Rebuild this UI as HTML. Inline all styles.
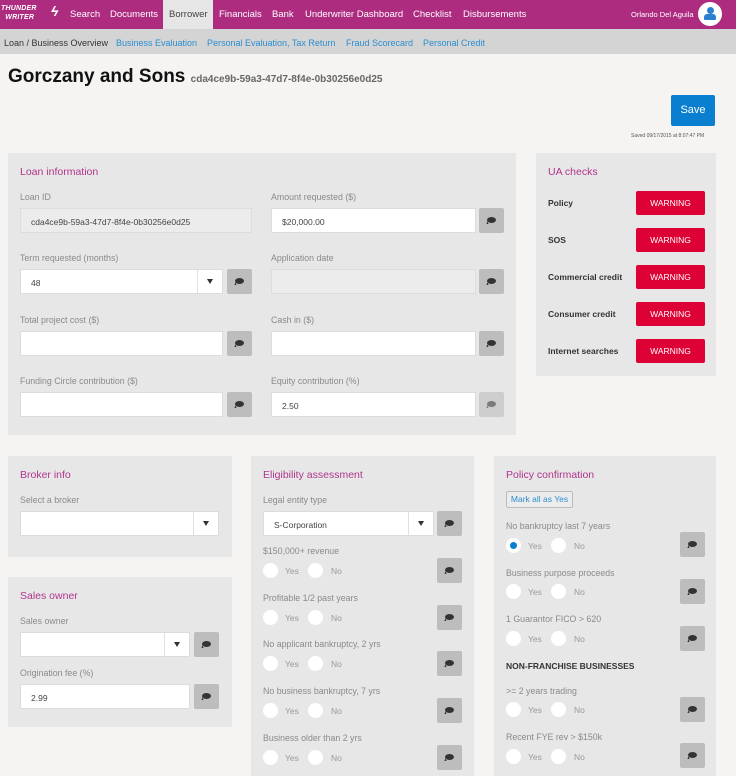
<!DOCTYPE html>
<html><head><meta charset="utf-8"><style>
*{box-sizing:border-box;margin:0;padding:0}
body{width:736px;height:775px;overflow:hidden;background:#f5f4f2;font-family:"Liberation Sans",sans-serif;position:relative;color:#777}
.a{position:absolute}
.nav{left:0;top:0;width:736px;height:29px;background:#ad2c80}
.nav span{position:absolute;top:9px;font-size:9.5px;color:#fff}
.sub{left:0;top:29px;width:736px;height:25px;background:#d4d4d4}
.sub span{position:absolute;top:9px;font-size:9px;color:#2b8ed0}
.panel{background:#e7e7e7}
.h{font-size:10.5px;color:#b0348c}
.l{font-size:8.8px;color:#8a8a8a}
.in{background:#fff;border:1px solid #dcdcdc;height:25px;font-size:8.5px;color:#444;padding:8px 0 0 10px}
.dis{background:#ececec;border:1px solid #ddd}
.c{background:#bdbdbd;width:25px;height:25px;border-radius:2px}
.c:after{content:"";position:absolute;left:8px;top:9px;width:9px;height:6px;background:#333;border-radius:50%}
.c:before{content:"";position:absolute;left:8px;top:13px;border-left:2px solid #333;border-top:3px solid transparent;transform:skewX(-20deg)}
.arr{border-left:1px solid #e0e0e0;width:25px;height:23px;top:0;right:0}
.arr:after{content:"";position:absolute;left:9px;top:9px;border-left:3.5px solid transparent;border-right:3.5px solid transparent;border-top:5px solid #333}
.w{background:#de0135;color:#fff;font-size:8.5px;width:69px;height:24px;border-radius:2px;text-align:center;line-height:24px;left:636px}
.ul{font-size:8.5px;font-weight:bold;color:#333;left:548px}
.r{width:15px;height:15px;border-radius:50%;background:#fff}
.y{font-size:8.5px;color:#999}
</style></head><body>
<div class="a nav">
<div class="a" style="left:1px;top:5px;font-size:7px;font-weight:bold;font-style:italic;color:#fff;line-height:8.5px;letter-spacing:.2px">THUNDER<br>&nbsp;&nbsp;WRITER</div>
<div class="a" style="left:51px;top:3px;font-size:14px;color:#fff;font-style:italic;font-weight:bold">ϟ</div>
<div class="a" style="left:163px;top:0;width:50px;height:29px;background:#e6e6e6"></div>
<span style="left:70px">Search</span><span style="left:110px">Documents</span><span style="left:169px;color:#444">Borrower</span><span style="left:219px">Financials</span><span style="left:272px">Bank</span><span style="left:305px">Underwriter Dashboard</span><span style="left:413px">Checklist</span><span style="left:463px">Disbursements</span>
<span style="left:631px;font-size:7.5px;top:10px">Orlando Del Aguila</span>
<div class="a" style="left:698px;top:2px;width:24px;height:24px;border-radius:50%;background:#fff"><div class="a" style="left:9px;top:5px;width:7px;height:7px;border-radius:50%;background:#2b7fd0"></div><div class="a" style="left:6px;top:12px;width:12px;height:6px;border-radius:3px 3px 1px 1px;background:#2b7fd0"></div></div>
</div>
<div class="a sub">
<span style="left:4px;color:#333">Loan / Business Overview</span><span style="left:116px">Business Evaluation</span><span style="left:207px">Personal Evaluation, Tax Return</span><span style="left:346px">Fraud Scorecard</span><span style="left:423px">Personal Credit</span>
</div>
<div class="a" style="left:8px;top:66px;font-size:19px;font-weight:bold;color:#111">Gorczany and Sons <span style="font-size:10px;color:#666">cda4ce9b-59a3-47d7-8f4e-0b30256e0d25</span></div>
<div class="a" style="left:671px;top:95px;width:44px;height:31px;background:#0a7fd0;border-radius:2px;color:#fff;font-size:11px;text-align:center;padding-top:9px">Save</div>
<div class="a" style="left:631px;top:133px;font-size:5px;color:#555">Saved 09/17/2015 at 8:07:47 PM</div>

<div class="a panel" style="left:8px;top:153px;width:508px;height:282px"></div>
<div class="a h" style="left:20px;top:166px">Loan information</div>
<div class="a l" style="left:20px;top:192px">Loan ID</div>
<div class="a in dis" style="left:20px;top:208px;width:232px">cda4ce9b-59a3-47d7-8f4e-0b30256e0d25</div>
<div class="a l" style="left:271px;top:192px">Amount requested ($)</div>
<div class="a in" style="left:271px;top:208px;width:205px">$20,000.00</div><div class="a c" style="left:479px;top:208px"></div>
<div class="a l" style="left:20px;top:253px">Term requested (months)</div>
<div class="a in" style="left:20px;top:269px;width:203px">48<div class="a arr"></div></div><div class="a c" style="left:227px;top:269px"></div>
<div class="a l" style="left:271px;top:253px">Application date</div>
<div class="a in dis" style="left:271px;top:269px;width:205px"></div><div class="a c" style="left:479px;top:269px"></div>
<div class="a l" style="left:20px;top:315px">Total project cost ($)</div>
<div class="a in" style="left:20px;top:331px;width:203px"></div><div class="a c" style="left:227px;top:331px"></div>
<div class="a l" style="left:271px;top:315px">Cash in ($)</div>
<div class="a in" style="left:271px;top:331px;width:205px"></div><div class="a c" style="left:479px;top:331px"></div>
<div class="a l" style="left:20px;top:376px">Funding Circle contribution ($)</div>
<div class="a in" style="left:20px;top:392px;width:203px"></div><div class="a c" style="left:227px;top:392px"></div>
<div class="a l" style="left:271px;top:376px">Equity contribution (%)</div>
<div class="a in" style="left:271px;top:392px;width:205px">2.50</div><div class="a c" style="left:479px;top:392px;opacity:.6"></div>

<div class="a panel" style="left:536px;top:153px;width:180px;height:223px"></div>
<div class="a h" style="left:548px;top:166px">UA checks</div>
<div class="a ul" style="top:198px">Policy</div><div class="a w" style="top:191px">WARNING</div>
<div class="a ul" style="top:235px">SOS</div><div class="a w" style="top:228px">WARNING</div>
<div class="a ul" style="top:272px">Commercial credit</div><div class="a w" style="top:265px">WARNING</div>
<div class="a ul" style="top:309px">Consumer credit</div><div class="a w" style="top:302px">WARNING</div>
<div class="a ul" style="top:346px">Internet searches</div><div class="a w" style="top:339px">WARNING</div>

<div class="a panel" style="left:8px;top:456px;width:224px;height:101px"></div>
<div class="a h" style="left:20px;top:469px">Broker info</div>
<div class="a l" style="left:20px;top:495px">Select a broker</div>
<div class="a in" style="left:20px;top:511px;width:199px"><div class="a arr"></div></div>

<div class="a panel" style="left:8px;top:577px;width:224px;height:150px"></div>
<div class="a h" style="left:20px;top:590px">Sales owner</div>
<div class="a l" style="left:20px;top:616px">Sales owner</div>
<div class="a in" style="left:20px;top:632px;width:170px"><div class="a arr"></div></div><div class="a c" style="left:194px;top:632px"></div>
<div class="a l" style="left:20px;top:668px">Origination fee (%)</div>
<div class="a in" style="left:20px;top:684px;width:170px">2.99</div><div class="a c" style="left:194px;top:684px"></div>

<div class="a panel" style="left:251px;top:456px;width:223px;height:320px"></div>
<div class="a h" style="left:263px;top:469px">Eligibility assessment</div>
<div class="a l" style="left:263px;top:495px">Legal entity type</div>
<div class="a in" style="left:263px;top:511px;width:171px">S-Corporation<div class="a arr"></div></div><div class="a c" style="left:437px;top:511px"></div>

<div class="a l" style="left:263px;top:546px">$150,000+ revenue</div>
<div class="a r" style="left:263px;top:563px"></div><div class="a y" style="left:285px;top:566px">Yes</div><div class="a r" style="left:308px;top:563px"></div><div class="a y" style="left:331px;top:566px">No</div><div class="a c" style="left:437px;top:558px"></div>
<div class="a l" style="left:263px;top:593px">Profitable 1/2 past years</div>
<div class="a r" style="left:263px;top:610px"></div><div class="a y" style="left:285px;top:613px">Yes</div><div class="a r" style="left:308px;top:610px"></div><div class="a y" style="left:331px;top:613px">No</div><div class="a c" style="left:437px;top:605px"></div>
<div class="a l" style="left:263px;top:639px">No applicant bankruptcy, 2 yrs</div>
<div class="a r" style="left:263px;top:656px"></div><div class="a y" style="left:285px;top:659px">Yes</div><div class="a r" style="left:308px;top:656px"></div><div class="a y" style="left:331px;top:659px">No</div><div class="a c" style="left:437px;top:651px"></div>
<div class="a l" style="left:263px;top:686px">No business bankruptcy, 7 yrs</div>
<div class="a r" style="left:263px;top:703px"></div><div class="a y" style="left:285px;top:706px">Yes</div><div class="a r" style="left:308px;top:703px"></div><div class="a y" style="left:331px;top:706px">No</div><div class="a c" style="left:437px;top:698px"></div>
<div class="a l" style="left:263px;top:733px">Business older than 2 yrs</div>
<div class="a r" style="left:263px;top:750px"></div><div class="a y" style="left:285px;top:753px">Yes</div><div class="a r" style="left:308px;top:750px"></div><div class="a y" style="left:331px;top:753px">No</div><div class="a c" style="left:437px;top:745px"></div>

<div class="a panel" style="left:494px;top:456px;width:222px;height:320px"></div>
<div class="a h" style="left:506px;top:469px">Policy confirmation</div>
<div class="a" style="left:506px;top:491px;width:67px;height:17px;border:1px solid #bbb;border-radius:2px;background:#ececec;font-size:8.5px;color:#2b8ed0;line-height:15px;text-align:center">Mark all as Yes</div>
<div class="a l" style="left:506px;top:521px">No bankruptcy last 7 years</div>
<div class="a r" style="left:506px;top:538px"><div class="a" style="left:4px;top:4px;width:7px;height:7px;border-radius:50%;background:#0a7fd0"></div></div><div class="a y" style="left:528px;top:541px">Yes</div><div class="a r" style="left:551px;top:538px"></div><div class="a y" style="left:574px;top:541px">No</div><div class="a c" style="left:680px;top:532px"></div>
<div class="a l" style="left:506px;top:568px">Business purpose proceeds</div>
<div class="a r" style="left:506px;top:584px"></div><div class="a y" style="left:528px;top:587px">Yes</div><div class="a r" style="left:551px;top:584px"></div><div class="a y" style="left:574px;top:587px">No</div><div class="a c" style="left:680px;top:579px"></div>
<div class="a l" style="left:506px;top:614px">1 Guarantor FICO &gt; 620</div>
<div class="a r" style="left:506px;top:631px"></div><div class="a y" style="left:528px;top:634px">Yes</div><div class="a r" style="left:551px;top:631px"></div><div class="a y" style="left:574px;top:634px">No</div><div class="a c" style="left:680px;top:626px"></div>
<div class="a" style="left:506px;top:661px;font-size:8.5px;font-weight:bold;color:#333">NON-FRANCHISE BUSINESSES</div>
<div class="a l" style="left:506px;top:686px">&gt;= 2 years trading</div>
<div class="a r" style="left:506px;top:702px"></div><div class="a y" style="left:528px;top:705px">Yes</div><div class="a r" style="left:551px;top:702px"></div><div class="a y" style="left:574px;top:705px">No</div><div class="a c" style="left:680px;top:697px"></div>
<div class="a l" style="left:506px;top:732px">Recent FYE rev &gt; $150k</div>
<div class="a r" style="left:506px;top:749px"></div><div class="a y" style="left:528px;top:752px">Yes</div><div class="a r" style="left:551px;top:749px"></div><div class="a y" style="left:574px;top:752px">No</div><div class="a c" style="left:680px;top:743px"></div>
</body></html>
